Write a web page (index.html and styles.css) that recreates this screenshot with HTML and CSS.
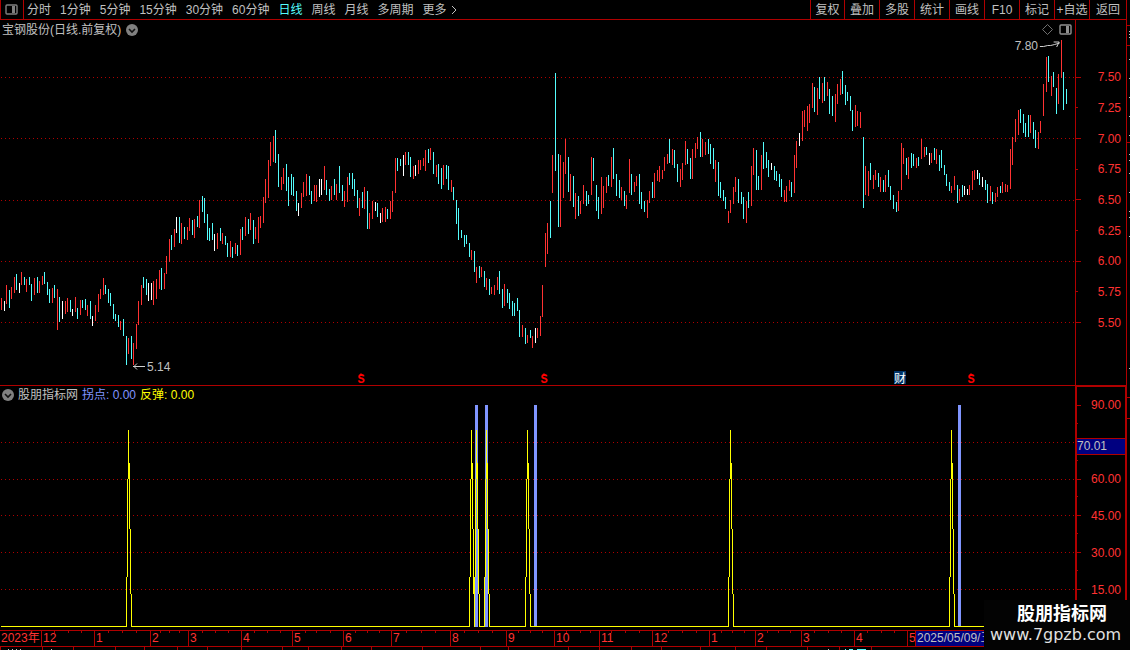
FILE: index.html
```html
<!DOCTYPE html>
<html lang="zh-CN">
<head>
    <meta charset="UTF-8">
    <meta name="viewport" content="width=device-width, initial-scale=1.0">
    <title>宝钢股份 日线</title>
    <link rel="stylesheet" href="styles.css">
</head>
<body>

    <div class="terminal">
        <div class="main">
            <div class="toolbar">
                <button class="panel-btn" aria-label="侧栏">
                    <svg width="13" height="11" viewBox="0 0 13 11">
                        <rect x="1" y="1" width="11" height="9" rx="1" fill="none" stroke="#808080" stroke-width="1.4"/>
                        <rect x="7" y="2" width="3" height="7" fill="#808080"/>
                    </svg>
                </button>
                <nav class="periods">
                    <button>分时</button>
                    <button>1分钟</button>
                    <button>5分钟</button>
                    <button>15分钟</button>
                    <button>30分钟</button>
                    <button>60分钟</button>
                    <button class="active">日线</button>
                    <button>周线</button>
                    <button>月线</button>
                    <button>多周期</button>
                    <button class="more">更多
                        <svg width="6" height="10" viewBox="0 0 6 10"><path d="M1 1L5 5L1 9" fill="none" stroke="#c0c0c0"/></svg>
                    </button>
                </nav>
                <div class="tools">
                    <button>复权</button>
                    <button>叠加</button>
                    <button>多股</button>
                    <button>统计</button>
                    <button>画线</button>
                    <button>F10</button>
                    <button>标记</button>
                    <button>+自选</button>
                    <button>返回</button>
                </div>
            </div>

            <div class="pane price">
                <div class="plot">
                    <svg id="priceChart" class="chart" viewBox="0 20 1075 365" preserveAspectRatio="none"></svg>
                    <div class="pane-head">
                        <h1>宝钢股份(日线.前复权)</h1>
                        <svg width="12" height="12" viewBox="0 0 12 12">
                            <circle cx="6" cy="6" r="6" fill="#808080"/>
                            <path d="M3 5L6 8L9 5" fill="none" stroke="#111" stroke-width="1.6"/>
                        </svg>
                    </div>
                    <div class="pane-icons">
                        <svg width="11" height="11" viewBox="0 0 11 11"><path d="M5.5 .5L10.5 5.5L5.5 10.5L.5 5.5Z" fill="none" stroke="#707070"/></svg>
                        <svg width="13" height="11" viewBox="0 0 13 11">
                            <rect x="1" y="1" width="11" height="9" rx="1" fill="none" stroke="#909090" stroke-width="1.4"/>
                            <rect x="7" y="2" width="3" height="7" fill="#909090"/>
                        </svg>
                    </div>
                    <div class="pin high" style="--x: 1061; --y: 21">
                        7.80
                        <svg width="21" height="8" viewBox="0 0 21 8"><path d="M0 5.5H4L8 4.5H11L15 3.5L20 2M14 1H19.5L17 6" fill="none" stroke="#d0d0d0"/></svg>
                    </div>
                    <div class="pin low" style="--x: 133; --y: 343">
                        <svg width="12" height="7" viewBox="0 0 12 7"><path d="M0 3.5H12M4 .5L1 3.5L4 6.5" fill="none" stroke="#d0d0d0"/></svg>
                        5.14
                    </div>
                    <div class="mark" style="--x: 361">S</div>
                    <div class="mark" style="--x: 544">S</div>
                    <div class="mark" style="--x: 971">S</div>
                    <div class="mark report" style="--x: 900">财</div>
                </div>
                <ul class="scale">
                    <li>7.50</li>
                    <li>7.25</li>
                    <li>7.00</li>
                    <li>6.75</li>
                    <li>6.50</li>
                    <li>6.25</li>
                    <li>6.00</li>
                    <li>5.75</li>
                    <li>5.50</li>
                </ul>
            </div>

            <div class="pane indicator">
                <div class="plot">
                    <svg id="signalChart" class="chart" viewBox="0 386 1075 244" preserveAspectRatio="none"></svg>
                    <div class="pane-head">
                        <svg width="12" height="12" viewBox="0 0 12 12">
                            <circle cx="6" cy="6" r="6" fill="#808080"/>
                            <path d="M3 5L6 8L9 5" fill="none" stroke="#111" stroke-width="1.6"/>
                        </svg>
                        <h2>股朋指标网</h2>
                        <span class="turn">拐点: 0.00</span>
                        <span class="bounce">反弹: 0.00</span>
                    </div>
                </div>
                <ul class="scale">
                    <li>90.00</li>
                    <li></li>
                    <li>60.00</li>
                    <li>45.00</li>
                    <li>30.00</li>
                    <li>15.00</li>
                </ul>
                <div class="cursor-value">70.01</div>
            </div>

            <div class="dates">
                <span>2023年</span>
                <span>12</span>
                <span>1</span>
                <span>2</span>
                <span>3</span>
                <span>4</span>
                <span>5</span>
                <span>6</span>
                <span>7</span>
                <span>8</span>
                <span>9</span>
                <span>10</span>
                <span>11</span>
                <span>12</span>
                <span>1</span>
                <span>2</span>
                <span>3</span>
                <span>4</span>
                <span>5</span>
                <span class="cursor-date">2025/05/09/五</span>
                <svg id="dateTicks" class="ticks" viewBox="0 0 1126 15" preserveAspectRatio="none"></svg>
            </div>
            <svg id="bottomStrip" class="strip" viewBox="0 0 1126 3" preserveAspectRatio="none"></svg>
        </div>
        <svg id="edge" class="edge" viewBox="0 0 4 650" preserveAspectRatio="none"></svg>

        <div class="watermark">
            <strong>股朋指标网</strong>
            <span>www.7gpzb.com</span>
        </div>
    </div>

    <script src="chart.js"></script>

</body>
</html>
```

FILE: styles.css
```css
* {
    box-sizing: border-box;
}

body {
    margin: 0;
    background-color: #000;
    color: #c0c0c0;
    font-family: "Liberation Sans", "Noto Sans CJK SC", sans-serif;
    font-size: 12px;
    line-height: 16px;
}

button {
    font: inherit;
    color: inherit;
    background: none;
    border: none;
    padding: 0;
    cursor: pointer;
    white-space: nowrap;
}

h1, h2 {
    margin: 0;
    font-size: 12px;
    font-weight: normal;
}

svg {
    display: block;
    flex-shrink: 0;
}

.terminal {
    position: relative;
    display: flex;
    height: 100vh;
    overflow: hidden;
}

.main {
    flex: 1;
    min-width: 0;
    display: grid;
    grid-template-columns: minmax(0, 1fr);
    grid-template-rows: 20px minmax(0, 366fr) minmax(0, 244fr) 17px 3px;
}

.edge {
    width: 4px;
    height: 100%;
    shape-rendering: crispEdges;
}

/* toolbar */
.toolbar {
    display: flex;
    border-bottom: 1px solid #b00000;
}

.panel-btn {
    width: 24px;
    padding-left: 4px;
    border-left: 1px solid #b00000;
    border-right: 1px solid #b00000;
}

.periods {
    display: flex;
    gap: 9px;
    padding-left: 3px;
}

.periods .active { color: #54fcfc; }

.more {
    display: flex;
    align-items: center;
    gap: 4px;
}

.tools {
    display: flex;
    margin-left: auto;
}

.tools button {
    width: 35px;
    border-left: 1px solid #b00000;
}

.tools button:first-child { width: 34px; }
.tools button:last-child { width: 37px; }

/* panes */
.pane {
    position: relative;
    display: grid;
    grid-template-columns: minmax(0, 1fr) 51px;
    grid-template-rows: minmax(0, 1fr);
}

.price { border-bottom: 1px solid #b00000; }

.plot {
    position: relative;
    min-height: 0;
}

.chart {
    width: 100%;
    height: 100%;
    shape-rendering: crispEdges;
}

.up { fill: #ff3232; }
.down { fill: #54fcfc; }
.flat { fill: #fff; }
.grid-line { stroke: #b00000; stroke-dasharray: 1 3; }
.turn-bar { fill: #8095ff; }
.bounce-line { fill: #ff0; }
.tick { fill: #b00000; }
.speck { fill: #c0c0c0; }

.pane-head {
    position: absolute;
    top: 2px;
    left: 2px;
    display: flex;
    align-items: center;
    gap: 5px;
}

.indicator .pane-head {
    top: 1px;
    gap: 4px;
}

.turn { color: #8095ff; }
.bounce { color: #ff0; }

.pane-icons {
    position: absolute;
    top: 4px;
    right: 3px;
    display: flex;
    gap: 6px;
}

/* price labels and event marks */
.pin {
    position: absolute;
    left: calc(var(--x) / 1075 * 100%);
    top: calc(var(--y) / 365 * 100%);
    display: flex;
    gap: 2px;
    line-height: 8px;
}

.high { transform: translateX(-100%); line-height: 10px; }

.mark {
    position: absolute;
    left: calc(var(--x) / 1075 * 100%);
    bottom: 1px;
    transform: translateX(-50%);
    color: #f00;
    font-family: "Liberation Mono", monospace;
    font-weight: bold;
    font-size: 12px;
    line-height: 8px;
}

.mark::before {
    content: "";
    display: block;
    width: 5px;
    height: 3px;
    margin: 0 auto;
    background-color: #f00;
    clip-path: polygon(50% 0, 100% 100%, 0 100%);
}

.report {
    background-color: #003468;
    color: #fff;
    font-family: "Noto Sans CJK SC", sans-serif;
    font-weight: normal;
    line-height: 13px;
}

.report::before { display: none; }

/* right scales */
.scale {
    display: grid;
    grid-auto-rows: minmax(0, 1fr);
    margin: 0;
    padding: 42px 5px 47px 0;
    list-style: none;
    color: #ff3232;
    border-left: 1px solid #b00000;
}

.scale li {
    position: relative;
    display: flex;
    align-items: center;
    justify-content: space-between;
}

.scale li::before {
    content: "";
    width: 5px;
    height: 1px;
    background-color: #b00000;
}

.price .scale li:nth-child(even)::before { width: 2px; }

.indicator .scale {
    padding: 0 4px 22px 0;
    border-top: 1px solid #b00000;
    border-right: 1px solid #b00000;
    border-left-width: 2px;
}

.indicator .scale li::before { width: 4px; }

.indicator .scale li::after {
    content: "";
    position: absolute;
    left: 0;
    bottom: 0;
    width: 1px;
    height: 1px;
    background-color: #b00000;
}

.cursor-value {
    position: absolute;
    top: 52px;
    right: 1px;
    width: 48px;
    height: 17px;
    background-color: #000080;
    border-top: 1px solid #b00000;
    border-bottom: 1px solid #b00000;
    line-height: 15px;
}

/* date axis, one column per month */
.dates {
    position: relative;
    display: grid;
    grid-template-columns: 41fr 53fr 56fr 38fr 53fr 51fr 51fr 48fr 59fr 56fr 48fr 45fr 53fr 57fr 46fr 46fr 53fr 53fr 8fr 211fr;
    color: #ff3232;
    border-top: 1px solid #b00000;
    border-bottom: 1px solid #b00000;
    line-height: 15px;
}

.dates span {
    min-width: 0;
    padding-left: 1px;
    border-left: 1px solid #b00000;
    white-space: nowrap;
}

.dates span:first-child { border-left: none; }

.dates .cursor-date {
    background-color: #000080;
    color: #c0c0c0;
}

.ticks {
    position: absolute;
    top: 0;
    left: 0;
    width: 100%;
    height: 100%;
    shape-rendering: crispEdges;
}

.strip {
    width: 100%;
    height: 100%;
    shape-rendering: crispEdges;
}

.watermark {
    position: absolute;
    right: 0;
    bottom: 0;
    width: 146px;
    height: 50px;
    padding: 3px 6px;
    background-color: #030303;
    color: #e0e0e0;
    font-family: "DejaVu Sans", sans-serif;
    font-size: 16px;
    line-height: 20px;
}

.watermark strong {
    display: block;
    padding-left: 27px;
    color: #fff;
    font-family: "Liberation Sans", "Noto Sans CJK SC", sans-serif;
    font-size: 18px;
    line-height: 22px;
}
```

FILE: chart.js
```js
const SVG_NS = 'http://www.w3.org/2000/svg';

// one bar per day: x, high, low, colour (r = up, c = down, w = flat)
const bars = `
1 298 310 r,4 301 311 w,6 285 304 r,9 290 308 c,11 287 299 r,14 277 293 r,16 274 290 c,19 283 293 w,
21 272 285 r,24 277 285 c,26 279 292 r,29 277 285 c,31 284 301 c,34 278 295 r,37 277 293 c,39 281 293 r,
42 276 285 r,44 272 284 c,47 282 295 c,49 289 303 c,52 288 303 r,54 285 298 c,57 289 330 r,59 297 322 c,
62 301 319 w,65 301 314 r,67 298 312 r,70 300 312 c,72 309 316 w,75 297 312 r,77 308 319 c,80 300 315 r,
82 300 308 c,85 299 310 c,87 305 316 r,90 301 319 c,92 316 326 w,95 305 321 r,98 294 312 r,100 289 299 r,
103 278 295 r,105 285 294 c,108 289 303 c,110 293 306 c,113 304 319 c,115 314 321 c,118 315 327 c,120 321 330 r,
123 319 336 c,126 336 365 c,128 338 354 r,131 336 359 c,133 343 365 r,136 324 349 r,138 301 325 r,141 285 305 r,
143 277 288 c,146 279 295 c,148 283 301 w,151 283 300 w,153 281 305 r,156 279 299 r,159 270 289 r,161 268 290 c,
164 273 289 r,166 256 274 r,169 239 262 r,171 235 250 c,174 229 247 r,176 217 233 w,179 217 243 c,181 223 244 r,
184 227 239 c,187 227 240 r,189 218 231 r,192 220 235 c,194 219 238 r,197 216 227 c,199 200 228 r,202 196 212 c,
204 198 223 c,207 214 240 c,209 228 241 c,212 223 240 c,214 234 251 w,217 233 249 r,220 228 241 c,222 233 244 r,
225 236 245 c,227 243 257 c,230 241 257 r,232 247 258 c,235 243 254 r,237 245 256 c,240 229 255 r,242 227 240 c,
245 217 236 r,248 219 234 c,250 213 230 r,253 220 244 c,255 227 239 r,258 217 243 r,260 216 228 r,263 197 223 r,
265 179 203 r,268 160 198 r,270 142 166 r,273 136 162 r,275 130 163 c,278 154 187 c,281 177 190 r,283 168 184 r,
286 164 191 c,288 177 206 c,291 174 195 c,293 177 196 c,296 191 211 c,298 203 216 w,301 193 208 r,303 182 197 r,
306 174 196 r,309 176 195 c,311 191 204 c,314 185 201 r,316 185 202 r,319 179 197 w,321 179 195 w,324 166 190 r,
326 180 195 c,329 189 201 c,331 186 200 r,334 179 195 c,336 184 200 r,339 166 193 c,342 185 201 c,344 191 207 r,
347 177 202 r,349 173 185 c,352 173 189 c,354 179 196 c,357 190 208 c,359 198 216 r,362 192 208 c,364 187 209 r,
367 191 229 c,369 213 229 r,372 201 219 r,375 202 211 w,377 203 217 c,380 213 223 w,382 208 222 r,385 207 222 r,
387 209 219 c,390 201 219 r,392 191 212 r,395 158 193 r,397 158 171 c,400 159 166 c,403 155 176 w,405 152 165 r,
408 152 165 c,410 157 177 c,413 166 179 r,415 165 176 w,418 160 174 r,420 160 170 r,423 158 166 r,425 150 171 r,
428 149 163 c,430 148 160 r,433 152 174 c,436 165 177 r,438 164 184 c,441 168 189 c,443 165 185 r,446 165 179 c,
448 166 190 c,451 180 192 r,453 187 200 c,456 200 224 c,458 208 240 c,461 230 238 c,464 235 247 c,466 235 244 c,
469 243 257 c,471 250 260 r,474 251 272 c,476 267 283 r,479 266 278 c,481 267 277 r,484 271 287 c,486 278 290 r,
489 279 295 c,491 287 294 r,494 285 295 r,497 277 290 r,499 271 294 c,502 289 308 c,504 284 306 r,507 289 303 c,
509 293 309 c,512 301 316 c,514 303 316 c,517 298 311 c,519 310 337 c,522 325 337 r,525 328 344 c,527 335 343 r,
530 330 338 c,532 336 348 r,535 328 343 w,537 328 338 r,540 316 336 r,542 285 317 r,545 233 267 r,547 223 254 r,
550 201 238 c,552 155 193 r,555 73 171 c,558 154 227 c,560 155 227 r,563 162 198 r,565 139 174 r,568 157 192 c,
570 174 201 r,573 176 207 c,575 193 219 r,578 196 216 c,580 201 214 r,583 185 204 r,586 191 206 c,588 195 204 c,
591 157 195 r,593 158 181 c,596 185 211 c,598 197 219 c,601 177 214 r,603 186 208 r,606 177 193 r,608 175 186 c,
611 157 187 r,613 148 179 c,616 174 196 c,619 180 198 c,621 187 200 r,624 191 206 c,626 195 209 r,629 159 193 r,
631 174 195 c,634 182 192 r,636 176 186 r,639 174 204 c,641 192 209 c,644 201 212 c,647 200 218 r,649 191 203 r,
652 182 198 c,654 173 198 r,657 170 181 r,659 166 182 r,662 170 179 r,664 157 171 r,667 154 164 r,669 139 163 c,
672 149 165 r,674 150 168 c,677 164 182 c,680 169 187 r,682 163 180 r,685 141 165 r,687 149 164 c,690 158 179 c,
692 149 179 r,695 143 158 r,697 137 149 r,700 132 157 c,702 139 157 r,705 142 155 r,708 139 154 c,710 144 164 c,
713 148 169 c,715 160 182 r,718 162 196 c,720 182 198 c,723 190 201 c,725 197 209 c,728 211 223 r,730 200 213 r,
733 187 204 r,735 177 192 r,738 179 203 c,741 192 204 c,743 197 219 c,746 201 223 r,748 192 208 c,751 166 206 r,
753 148 175 r,756 150 190 c,758 176 190 c,761 155 190 r,763 142 169 c,766 152 168 c,768 160 177 c,771 163 170 w,
774 166 180 c,776 171 181 c,779 174 187 c,781 179 197 c,784 190 202 r,786 186 202 r,789 180 191 r,791 182 197 c,
794 155 193 r,796 141 168 r,799 133 146 w,802 111 141 r,804 110 127 r,807 106 131 r,809 104 123 r,812 83 108 r,
814 87 112 c,817 88 115 r,819 77 99 c,822 83 103 r,824 77 101 c,827 82 96 r,829 89 114 c,832 96 116 c,
835 94 122 r,837 84 104 r,840 79 95 r,842 71 94 c,845 85 105 c,847 92 101 c,850 96 111 c,852 110 131 c,
855 105 127 r,857 111 126 r,860 112 128 r,863 137 208 c,865 166 195 r,868 171 196 r,870 163 180 c,873 175 189 r,
875 170 180 r,878 173 187 c,880 177 192 r,883 180 192 c,885 175 192 r,888 170 187 c,890 186 200 c,893 195 209 c,
896 202 212 c,898 191 211 r,901 143 190 r,903 148 164 r,906 158 175 c,908 157 179 r,911 153 168 c,913 154 166 c,
916 158 168 r,918 157 166 c,921 139 159 r,924 147 157 r,926 147 155 c,929 153 165 w,931 153 163 r,934 148 160 c,
936 149 164 r,939 155 171 c,941 150 168 c,944 165 175 c,946 174 186 c,949 182 191 c,951 186 193 r,954 176 190 r,
957 185 203 c,959 189 201 r,962 185 197 c,964 186 195 w,967 189 195 w,969 185 195 r,972 171 190 r,974 170 180 r,
977 170 179 w,979 173 185 c,982 177 187 w,985 180 190 c,987 184 203 c,990 186 201 r,992 192 204 c,995 193 202 r,
997 187 197 r,1000 186 193 c,1002 182 193 r,1005 184 192 r,1007 185 192 r,1010 149 189 r,1012 137 165 r,
1015 119 142 r,1018 110 135 r,1020 109 123 c,1023 114 133 c,1025 123 137 c,1028 115 137 c,1030 115 133 r,
1033 122 139 c,1035 130 148 c,1038 132 149 r,1040 121 133 r,1043 84 116 r,1046 57 92 r,1048 56 82 c,1051 76 96 r,
1053 72 87 c,1056 88 114 c,1058 74 104 r,1061 40 78 r,1063 72 110 c,1066 89 104 c`;

const barClass = { r: 'up', c: 'down', w: 'flat' };

const priceChart = document.getElementById('priceChart');
const signalChart = document.getElementById('signalChart');
const dateTicks = document.getElementById('dateTicks');
const bottomStrip = document.getElementById('bottomStrip');
const edge = document.getElementById('edge');

function addRect(svg, x, y, width, height, className) {
    const rect = document.createElementNS(SVG_NS, 'rect');
    rect.setAttribute('x', x);
    rect.setAttribute('y', y);
    rect.setAttribute('width', width);
    rect.setAttribute('height', height);
    rect.setAttribute('class', className);
    svg.appendChild(rect);
}

function addGridLine(svg, y) {
    const line = document.createElementNS(SVG_NS, 'line');
    line.setAttribute('x1', 1);
    line.setAttribute('x2', 1075);
    line.setAttribute('y1', y + 0.5);
    line.setAttribute('y2', y + 0.5);
    line.setAttribute('class', 'grid-line');
    svg.appendChild(line);
}

// price
[77, 138, 200, 261, 322].forEach(y => addGridLine(priceChart, y));

bars.trim().split(/,\s*/).forEach(bar => {
    const [x, high, low, type] = bar.split(' ');
    addRect(priceChart, x, high, 1, low - high, barClass[type]);
});

// signals
[442, 479, 515, 552, 589].forEach(y => addGridLine(signalChart, y));
[475, 485, 534, 958].forEach(x => addRect(signalChart, x, 405, 3, 222, 'turn-bar'));

// each spike is stepped, top and bottom of the six columns from left to right
const steps = [[577, 627], [479, 577], [430, 479], [463, 529], [529, 594], [594, 627]];
let baseStart = 1;
[128, 471, 476, 486, 527, 730, 951].forEach(peak => {
    steps.forEach(([top, bottom], i) => {
        addRect(signalChart, peak - 2 + i, top, 1, bottom - top, 'bounce-line');
    });
    addRect(signalChart, baseStart, 626, peak - 2 - baseStart, 1, 'bounce-line');
    baseStart = peak + 3;
});
addRect(signalChart, baseStart, 626, 1067 - baseStart, 1, 'bounce-line');

// week ticks
[54, 68, 81, 108, 122, 136, 160, 169, 179, 202, 215, 228, 254, 267, 280, 305, 316, 330, 355, 367, 379,
    406, 421, 435, 464, 478, 492, 518, 530, 542, 566, 580, 590, 611, 625, 639, 668, 682, 696, 721, 732,
    744, 767, 778, 790, 814, 828, 841, 867, 881, 894].forEach(x => addRect(dateTicks, x, 0, 1, 2, 'tick'));

// tabs below the axis
[0, 42, 73, 115, 144, 177, 207, 241, 282, 308, 341, 371, 422, 480, 508, 568, 599, 631, 661, 700, 735,
    766, 807, 839, 871].forEach(x => addRect(bottomStrip, x, 0, 1, 3, 'tick'));
[8, 12, 16, 20, 51, 828].forEach(x => addRect(bottomStrip, x, 2, 1, 1, 'speck'));
addRect(bottomStrip, 845, 2, 1, 1, 'down');
addRect(bottomStrip, 849, 2, 4, 1, 'down');
addRect(bottomStrip, 857, 2, 9, 1, 'down');

// right edge
addRect(edge, 0, 0, 1, 650, 'tick');
[25, 45, 142, 397, 418].forEach(y => addRect(edge, 1, y, 3, 1, 'tick'));
[31, 34, 37, 59, 78, 97, 116, 135, 154, 160, 173, 192, 211, 217, 236, 368].forEach(y => addRect(edge, 3, y, 1, 1, 'speck'));
```
